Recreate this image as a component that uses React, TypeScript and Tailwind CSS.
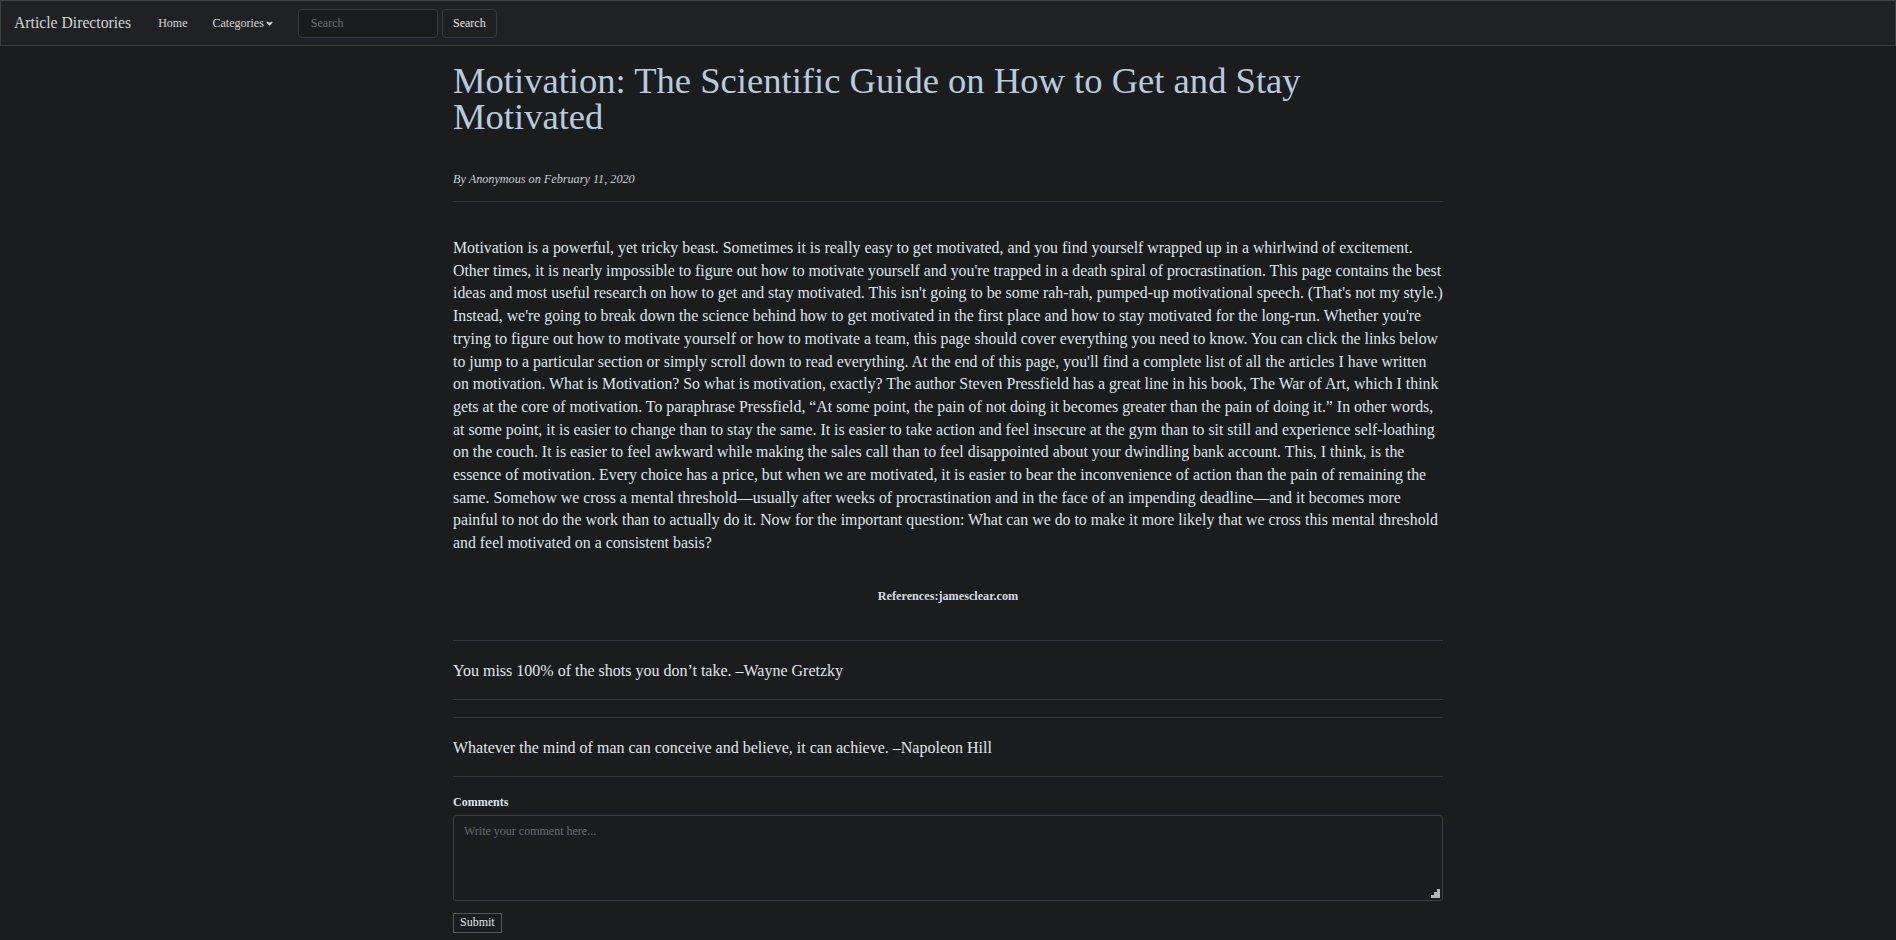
import { ChevronDown } from 'lucide-react';

const body =
  "Motivation is a powerful, yet tricky beast. Sometimes it is really easy to get motivated, and you find yourself wrapped up in a whirlwind of excitement. Other times, it is nearly impossible to figure out how to motivate yourself and you're trapped in a death spiral of procrastination. This page contains the best ideas and most useful research on how to get and stay motivated. This isn't going to be some rah-rah, pumped-up motivational speech. (That's not my style.) Instead, we're going to break down the science behind how to get motivated in the first place and how to stay motivated for the long-run. Whether you're trying to figure out how to motivate yourself or how to motivate a team, this page should cover everything you need to know. You can click the links below to jump to a particular section or simply scroll down to read everything. At the end of this page, you'll find a complete list of all the articles I have written on motivation. What is Motivation? So what is motivation, exactly? The author Steven Pressfield has a great line in his book, The War of Art, which I think gets at the core of motivation. To paraphrase Pressfield, \u201cAt some point, the pain of not doing it becomes greater than the pain of doing it.\u201d In other words, at some point, it is easier to change than to stay the same. It is easier to take action and feel insecure at the gym than to sit still and experience self-loathing on the couch. It is easier to feel awkward while making the sales call than to feel disappointed about your dwindling bank account. This, I think, is the essence of motivation. Every choice has a price, but when we are motivated, it is easier to bear the inconvenience of action than the pain of remaining the same. Somehow we cross a mental threshold\u2014usually after weeks of procrastination and in the face of an impending deadline\u2014and it becomes more painful to not do the work than to actually do it. Now for the important question: What can we do to make it more likely that we cross this mental threshold and feel motivated on a consistent basis?";

const quotes = [
  'You miss 100% of the shots you don\u2019t take. \u2013Wayne Gretzky',
  'Whatever the mind of man can conceive and believe, it can achieve. \u2013Napoleon Hill',
];

function Navbar() {
  return (
    <nav className="h-[46px] bg-[#202124] border border-[#3d3e40] flex items-center">
      <a className="pl-[13px] pr-[27px] text-[15.7px] text-[#d2d4d6]">Article Directories</a>
      <a className="text-[12px] text-[#d6d8da]">Home</a>
      <a className="ml-[25px] flex items-center text-[12px] text-[#d6d8da]">
        Categories
        <ChevronDown className="w-[9px] h-[9px] ml-[1px] mt-[1px]" strokeWidth={4} fill="currentColor" />
      </a>
      <div className="ml-[24px] flex items-center gap-[4px]">
        <input
          placeholder="Search"
          className="w-[140px] h-[29px] rounded-[4px] bg-[#1a1b1d] border border-[#3a3b3e] px-[12px] text-[12px] text-[#ddd] placeholder:text-[#6f7174] outline-none"
        />
        <button className="h-[29px] w-[55px] rounded-[4px] bg-[#1f2022] border border-[#3a3b3e] text-[12px] text-[#e4e6e8]">
          Search
        </button>
      </div>
    </nav>
  );
}

export default function App() {
  return (
    <div
      className="min-h-[940px] bg-[#1b1c1e] text-[#dfe4ea]"
      style={{ fontFamily: '"Liberation Serif", "Times New Roman", serif' }}
    >
      <Navbar />
      <main className="w-[990px] mx-auto">
        <h1 className="mt-[17px] text-[36.6px] leading-[36px] text-[#b7cbdf] font-normal">
          Motivation: The Scientific Guide on How to Get and Stay
          <br />
          Motivated
        </h1>
        <p className="mt-[35px] text-[12.2px] leading-[18px] italic text-[#c9ced4]">
          By Anonymous on February 11, 2020
        </p>
        <div className="mt-[13px] border-t border-[#36373a]" />
        <p className="mt-[35px] text-[15.85px] leading-[22.7px]">{body}</p>
        <p className="mt-[33px] text-center text-[12.2px] leading-[17px] font-bold text-[#d6dde6]">
          References:jamesclear.com
        </p>
        <div className="mt-[35px]">
          {quotes.map((q, i) => (
            <div key={i} className={`border-y border-[#36373a] pt-[17px] pb-[16px] ${i > 0 ? 'mt-[17px]' : ''}`}>
              <p className="text-[16px] leading-[25px] text-[#e2e6ea]">{q}</p>
            </div>
          ))}
        </div>
        <label className="block mt-[17px] text-[12px] leading-[17px] font-bold text-[#dde3ea]">Comments</label>
        <div className="relative mt-[4px]">
          <textarea
            placeholder="Write your comment here..."
            className="block w-full h-[86px] resize-none rounded-[3px] bg-[#1b1c1e] border border-[#3e3f42] px-[10px] py-[6px] text-[12px] text-[#ddd] placeholder:text-[#6a6c70] outline-none"
          />
          <svg className="absolute right-[3px] bottom-[3px]" width="9" height="9" viewBox="0 0 9 9">
            <rect x="6" y="0" width="3" height="3" fill="#b5b5b5" />
            <rect x="3" y="3" width="3" height="3" fill="#b5b5b5" />
            <rect x="6" y="3" width="3" height="3" fill="#b5b5b5" />
            <rect x="0" y="6" width="3" height="3" fill="#b5b5b5" />
            <rect x="3" y="6" width="3" height="3" fill="#b5b5b5" />
            <rect x="6" y="6" width="3" height="3" fill="#b5b5b5" />
          </svg>
        </div>
        <button className="block mt-[12px] h-[20px] px-[6px] border border-[#55575a] text-[12px] leading-[17px] text-[#e0e4e8]">
          Submit
        </button>
      </main>
    </div>
  );
}
